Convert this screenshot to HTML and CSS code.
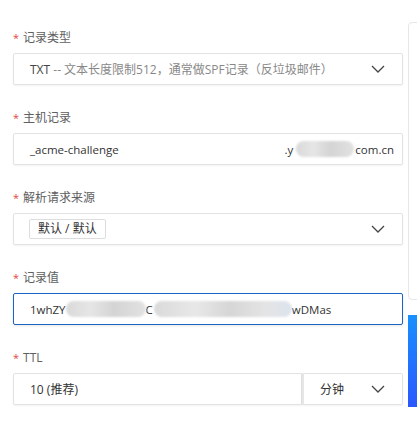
FILE: index.html
```html
<!DOCTYPE html>
<html lang="zh-CN">
<head>
<meta charset="utf-8">
<link rel="stylesheet" href="styles.css">
</head>
<body>
<div class="page">
  <form class="form">
    <div class="field">
      <div class="label"><span class="req">*</span>记录类型</div>
      <div class="control select">
        <span class="value"><span class="strong">TXT</span> -- 文本长度限制512，通常做SPF记录（反垃圾邮件）</span>
        <svg class="chev" width="14" height="8" viewBox="0 0 14 8"><polyline points="1,1 7,7 13,1" fill="none" stroke="#444" stroke-width="1.3"/></svg>
      </div>
    </div>
    <div class="field">
      <div class="label"><span class="req">*</span>主机记录</div>
      <div class="control">
        <span class="value strong latin">_acme-challenge</span>
        <span class="suffix latin">.y<span class="blur b-dom"></span>com.cn</span>
      </div>
    </div>
    <div class="field">
      <div class="label"><span class="req">*</span>解析请求来源</div>
      <div class="control select">
        <span class="tag">默认 / 默认</span>
        <svg class="chev" width="14" height="8" viewBox="0 0 14 8"><polyline points="1,1 7,7 13,1" fill="none" stroke="#444" stroke-width="1.3"/></svg>
      </div>
    </div>
    <div class="field">
      <div class="label"><span class="req">*</span>记录值</div>
      <div class="control focus">
        <span class="value strong latin">1whZY<span class="blur b-1"></span>C<span class="blur b-2"></span>wDMas</span>
      </div>
    </div>
    <div class="field">
      <div class="label"><span class="req">*</span>TTL</div>
      <div class="ttl">
        <div class="control ttl-input"><span class="value strong">10 (推荐)</span></div>
        <div class="control select ttl-unit">
          <span class="value strong">分钟</span>
          <svg class="chev" width="14" height="8" viewBox="0 0 14 8"><polyline points="1,1 7,7 13,1" fill="none" stroke="#444" stroke-width="1.3"/></svg>
        </div>
      </div>
    </div>
  </form>
  <aside class="side">
    <div class="panel"></div>
    <div class="bar"></div>
  </aside>
</div>
</body>
</html>
```

FILE: styles.css
```css
html, body {
  margin: 0;
  padding: 0;
  background: #fff;
  overflow: hidden;
}
body {
  font-family: "Open Sans", "Noto Sans CJK SC", sans-serif;
  font-size: 12px;
  color: #333;
}
.page {
  display: flex;
  width: 417px;
  height: 432px;
  overflow: hidden;
}
.form {
  width: 390px;
  flex: none;
  padding: 30px 0 0 13px;
  margin: 0;
}
.field {
  margin-bottom: 25px;
}
.label {
  height: 16px;
  line-height: 16px;
  margin-bottom: 7px;
  color: #606060;
  font-size: 12px;
}
.req {
  color: #e54545;
  margin-right: 4px;
  font-size: 11px;
}
.control {
  box-sizing: border-box;
  height: 32px;
  border: 1px solid #e2e2e2;
  border-radius: 2px;
  box-shadow: 0 1px 2px rgba(0, 0, 0, 0.05);
  display: flex;
  align-items: center;
  padding: 0 16px;
  background: #fff;
  position: relative;
}
.select {
  justify-content: space-between;
}
.select .chev {
  margin-right: 1px;
}
.value {
  color: #888;
  white-space: nowrap;
}
.strong {
  color: #333;
}
.value .strong {
  color: #444;
}
.latin {
  font-size: 11.5px;
  display: flex;
  align-items: center;
}
.suffix {
  margin-left: auto;
  margin-right: -8px;
  color: #333;
}
.blur {
  display: inline-block;
  height: 16px;
  border-radius: 8px;
  background: linear-gradient(90deg, #d9d9d9, #e6e6e6 30%, #d4d4d4 60%, #e2e2e2);
  filter: blur(1.2px);
  flex: none;
}
.b-dom {
  width: 58px;
  margin: 0 1px 0 3px;
}
.b-1 {
  width: 80px;
}
.b-2 {
  width: 138px;
  margin-left: 1px;
  background: linear-gradient(90deg, #dadada, #e8e8e8 30%, #d6d6d6 55%, #e4e4e4 80%, #dde4ee);
}
.tag {
  border: 1px solid #ddd;
  border-radius: 2px;
  padding: 0 8px;
  height: 18px;
  line-height: 18px;
  color: #333;
  margin-left: -1px;
}
.focus {
  border: 1.5px solid #1a64c4;
  box-shadow: 0 1px 3px rgba(0, 0, 0, 0.1);
  padding-left: 16px;
}
.ttl {
  display: flex;
}
.ttl-input {
  flex: 1;
  border-radius: 2px 0 0 2px;
}
.ttl-unit {
  width: 101px;
  flex: none;
  border-left: 2px solid #e6e6e6;
  border-radius: 0 2px 2px 0;
}
.side {
  margin-left: 5px;
  width: 40px;
  flex: none;
  display: flex;
  flex-direction: column;
}
.panel {
  margin-top: 22px;
  height: 278px;
  border: 1px solid #e6e6e6;
  border-radius: 4px;
  box-sizing: border-box;
}
.bar {
  margin-top: 15px;
  height: 92px;
  width: 9px;
  background: linear-gradient(180deg, #1890ff, #2b57ff);
}
```
